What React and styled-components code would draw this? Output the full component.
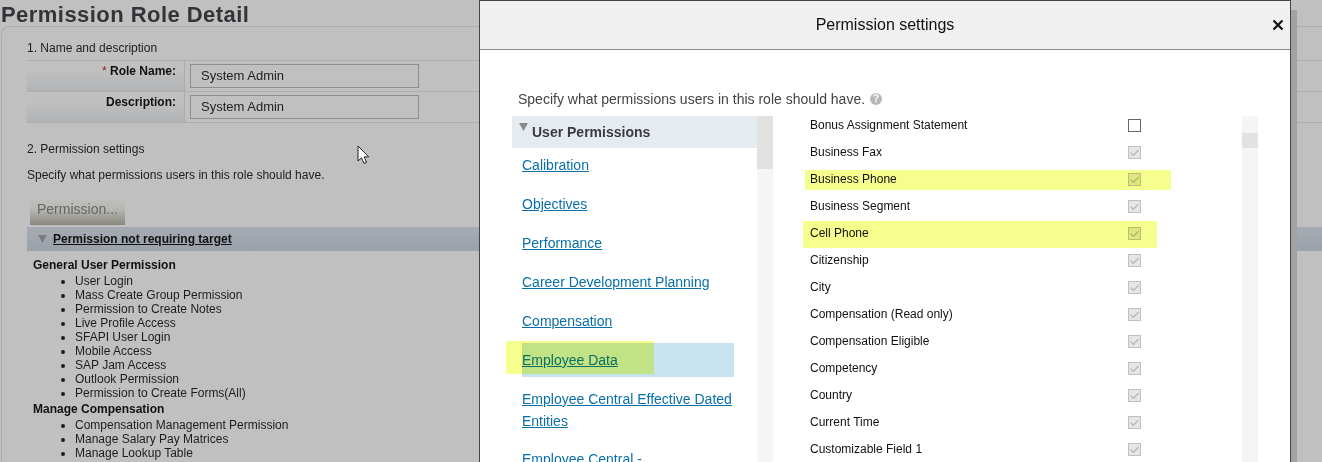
import React from 'react'
import styled, { createGlobalStyle } from 'styled-components'

const general = ['User Login', 'Mass Create Group Permission', 'Permission to Create Notes', 'Live Profile Access', 'SFAPI User Login', 'Mobile Access', 'SAP Jam Access', 'Outlook Permission', 'Permission to Create Forms(All)']
const compensation = ['Compensation Management Permission', 'Manage Salary Pay Matrices', 'Manage Lookup Table']
const categories = ['Calibration', 'Objectives', 'Performance', 'Career Development Planning', 'Compensation', 'Employee Data', 'Employee Central Effective Dated Entities', 'Employee Central -']
const fields = ['Bonus Assignment Statement', 'Business Fax', 'Business Phone', 'Business Segment', 'Cell Phone', 'Citizenship', 'City', 'Compensation (Read only)', 'Compensation Eligible', 'Competency', 'Country', 'Current Time', 'Customizable Field 1']

function App() {
    return (
        <Page>
            <GlobalStyle />
            <Title>Permission Role Detail</Title>
            <Card>
                <SectionTitle>1. Name and description</SectionTitle>
                <FormTable>
                    <FormRow>
                        <FormLabel><Required>*</Required> Role Name:</FormLabel>
                        <FormValue><TextBox>System Admin</TextBox></FormValue>
                    </FormRow>
                    <FormRow>
                        <FormLabel>Description:</FormLabel>
                        <FormValue><TextBox>System Admin</TextBox></FormValue>
                    </FormRow>
                </FormTable>
                <SettingsTitle>2. Permission settings</SettingsTitle>
                <Hint>Specify what permissions users in this role should have.</Hint>
                <GreyButton>Permission...</GreyButton>
                <GroupBar>
                    <svg width="9" height="8" viewBox="0 0 9 8"><path d="M0 0h9L4.5 8z" fill="#7c7c7c" /></svg>
                    <span>Permission not requiring target</span>
                </GroupBar>
                <GroupName>General User Permission</GroupName>
                <Bullets>{general.map(p => <li key={p}>{p}</li>)}</Bullets>
                <GroupName>Manage Compensation</GroupName>
                <Bullets>{compensation.map(p => <li key={p}>{p}</li>)}</Bullets>
            </Card>
            <Cursor width="14" height="20" viewBox="0 0 14 20">
                <path d="M1 1v15l3.5-3.2L7 18.5l2.6-1.1-2.5-5.5h4.6z" fill="#fff" stroke="#222" strokeWidth="1" />
            </Cursor>

            <Shadow />
            <Modal>
                <ModalHeader>
                    Permission settings
                    <Close>
                        <svg width="12" height="12" viewBox="0 0 12 12"><path d="M1.5 1.5l9 9M10.5 1.5l-9 9" stroke="#111" strokeWidth="2.2" /></svg>
                    </Close>
                </ModalHeader>
                <ModalBody>
                    <ModalHint>
                        Specify what permissions users in this role should have.
                        <HelpIcon>?</HelpIcon>
                    </ModalHint>
                    <Columns>
                        <LeftPane>
                            <Categories>
                                <CategoryHead>
                                    <svg width="9" height="9" viewBox="0 0 9 9"><path d="M0 0h9L4.5 8z" fill="#8a8a8e" /></svg>
                                    <span>User Permissions</span>
                                </CategoryHead>
                                {categories.map(c => (
                                    <Category key={c} $active={c === 'Employee Data'} $long={c.length > 30}><a href="#c">{c}</a></Category>
                                ))}
                            </Categories>
                            <Scrollbar $thumbTop={0} $thumbHeight={53} />
                        </LeftPane>
                        <RightPane>
                            <Fields>
                                {fields.map((f, i) => (
                                    <Field key={f}>
                                        <span>{f}</span>
                                        <CheckBox $checked={i > 0}>
                                            {i > 0 && <svg width="11" height="11" viewBox="0 0 11 11"><path d="M1.5 5.5l2.8 2.8L9.8 3" fill="none" stroke="#b8b8b8" strokeWidth="1.2" /></svg>}
                                        </CheckBox>
                                    </Field>
                                ))}
                            </Fields>
                            <Scrollbar $thumbTop={17} $thumbHeight={15} />
                        </RightPane>
                    </Columns>
                </ModalBody>
                <Marker $left={26} $top={340} $width={148} $height={33} />
                <Marker $left={325} $top={169} $width={366} $height={20} />
                <Marker $left={323} $top={220} $width={354} $height={27} />
            </Modal>
        </Page>
    )
}

export default App

const GlobalStyle = createGlobalStyle`
    html, body {
        margin: 0;
        padding: 0;
        background: #c0c0c0;
    }
    body {
        font-family: "Liberation Sans", Arial, sans-serif;
    }
`

const Page = styled.div`
    position: relative;
    width: 1322px;
    height: 462px;
    overflow: hidden;
    background: #c0c0c0;
    color: #111;
`

const Title = styled.h1`
    margin: 0;
    height: 26px;
    padding-left: 1px;
    font-family: "Liberation Sans", sans-serif;
    font-size: 22px;
    letter-spacing: 0.45px;
    line-height: 30px;
    font-weight: bold;
    color: #333338;
    white-space: nowrap;
`

const Card = styled.div`
    margin-left: 1px;
    height: 436px;
    padding: 14px 0 0 25px;
    box-sizing: border-box;
    border-top: 1px solid #aeaeae;
    border-left: 1px solid #aeaeae;
    border-top-left-radius: 8px;
    font-size: 12px;
`

const SectionTitle = styled.div`
    height: 19px;
    line-height: 14px;
    color: #1c1c22;
`

const FormTable = styled.div`
    border-top: 1px solid #adadad;
`

const FormRow = styled.div`
    display: flex;
    height: 30px;
    border-bottom: 1px solid #adadad;
`

const FormLabel = styled.div`
    box-sizing: border-box;
    width: 158px;
    padding: 3px 8px 0 0;
    text-align: right;
    font-weight: bold;
    line-height: 14px;
    border-right: 1px solid #adadad;
    background: linear-gradient(#c0c0c0 30%, #b1b3b6);
`

const Required = styled.span`
    color: #8a1c1c;
    font-weight: normal;
`

const FormValue = styled.div`
    padding: 3px 0 0 5px;
`

const TextBox = styled.div`
    box-sizing: border-box;
    width: 229px;
    height: 24px;
    padding-left: 10px;
    border: 1px solid #8e8e8e;
    font-size: 13px;
    line-height: 22px;
    color: #222;
`

const SettingsTitle = styled.div`
    margin-top: 19px;
    line-height: 14px;
    color: #1c1c22;
`

const Hint = styled.div`
    margin-top: 12px;
    line-height: 14px;
    color: #1c1c22;
`

const GreyButton = styled.div`
    margin: 13px 0 2px 3px;
    width: 95px;
    height: 30px;
    box-sizing: border-box;
    padding-left: 7px;
    font-size: 14px;
    line-height: 29px;
    color: #666;
    background: linear-gradient(#c2c2c2, #b6b6b1 50%, #88887f);
`

const GroupBar = styled.div`
    display: flex;
    align-items: center;
    gap: 6px;
    height: 24px;
    padding-left: 11px;
    box-sizing: border-box;
    background: linear-gradient(#a6abb3, #9ba1aa);
    font-weight: bold;
    color: #111;
    span {
        text-decoration: underline;
    }
`

const GroupName = styled.div`
    margin: 7px 0 0 6px;
    height: 14px;
    line-height: 14px;
    font-weight: bold;
    color: #111;
    & ~ & {
        margin-top: 2px;
    }
`

const Bullets = styled.ul`
    margin: 2px 0 0;
    padding: 0 0 0 48px;
    line-height: 14px;
    color: #1c1c22;
    li {
        height: 14px;
    }
`

const Cursor = styled.svg`
    position: absolute;
    left: 357px;
    top: 145px;
`

const Shadow = styled.div`
    position: absolute;
    left: 1291px;
    top: 10px;
    width: 6px;
    height: 452px;
    background: #a2a2a2;
`

const Modal = styled.div`
    position: absolute;
    left: 479px;
    top: 0;
    width: 812px;
    height: 462px;
    box-sizing: border-box;
    border: 1px solid #444;
    border-bottom: none;
    background: #fff;
    overflow: hidden;
`

const ModalHeader = styled.div`
    position: relative;
    height: 49px;
    box-sizing: border-box;
    border-bottom: 1px solid #8c8c8c;
    background: #f0f0f0;
    text-align: center;
    font-size: 16px;
    line-height: 48px;
    color: #111;
`

const Close = styled.div`
    position: absolute;
    right: 6px;
    top: 18px;
    display: flex;
`

const ModalBody = styled.div`
    padding: 40px 32px 0 32px;
`

const ModalHint = styled.div`
    display: flex;
    align-items: center;
    gap: 5px;
    height: 18px;
    font-size: 14px;
    color: #444;
    padding-left: 6px;
`

const HelpIcon = styled.span`
    display: inline-block;
    width: 12px;
    height: 12px;
    border-radius: 50%;
    background: #b8b8b8;
    color: #fff;
    font-size: 10px;
    font-weight: bold;
    line-height: 12px;
    text-align: center;
`

const Columns = styled.div`
    display: flex;
    margin-top: 8px;
    height: 346px;
`

const LeftPane = styled.div`
    display: flex;
    width: 261px;
`

const Categories = styled.div`
    display: flex;
    flex-direction: column;
    gap: 5px;
    width: 245px;
    height: 346px;
    overflow: hidden;
`

const CategoryHead = styled.div`
    display: flex;
    flex: none;
    align-items: flex-start;
    gap: 4px;
    height: 32px;
    margin-bottom: -5px;
    box-sizing: border-box;
    padding: 7px 0 0 7px;
    background: #e6ebf0;
    font-size: 14px;
    font-weight: bold;
    color: #3a3a42;
    span {
        margin-top: 1px;
    }
`

const Category = styled.div`
    flex: none;
    margin: 0 23px 0 10px;
    padding: 6px 0 ${({ $long }) => ($long ? '5px' : '6px')};
    font-size: 14px;
    line-height: 22px;
    background: ${({ $active }) => ($active ? '#c8e3f0' : 'transparent')};
    a {
        color: #0a6fa8;
    }
`

const Scrollbar = styled.div`
    position: relative;
    width: 16px;
    background: #f5f5f5;
    &::after {
        content: '';
        position: absolute;
        left: 0;
        right: 0;
        top: ${({ $thumbTop }) => $thumbTop}px;
        height: ${({ $thumbHeight }) => $thumbHeight}px;
        background: #e2e2e2;
    }
`

const RightPane = styled.div`
    display: flex;
    margin-left: 37px;
    flex: 1;
    justify-content: space-between;
`

const Fields = styled.div`
    width: 331px;
`

const Field = styled.div`
    display: flex;
    justify-content: space-between;
    height: 27px;
    font-size: 12px;
    line-height: 18px;
    color: #111;
`

const CheckBox = styled.div`
    box-sizing: border-box;
    display: flex;
    align-items: center;
    justify-content: center;
    width: 13px;
    height: 13px;
    margin-top: 3px;
    border: 1px solid ${({ $checked }) => ($checked ? '#c0c0c0' : '#666')};
    background: ${({ $checked }) => ($checked ? '#e6e6e6' : '#fff')};
`

const Marker = styled.div`
    position: absolute;
    left: ${({ $left }) => $left}px;
    top: ${({ $top }) => $top}px;
    width: ${({ $width }) => $width}px;
    height: ${({ $height }) => $height}px;
    background: #f6ff8e;
    mix-blend-mode: multiply;
`
